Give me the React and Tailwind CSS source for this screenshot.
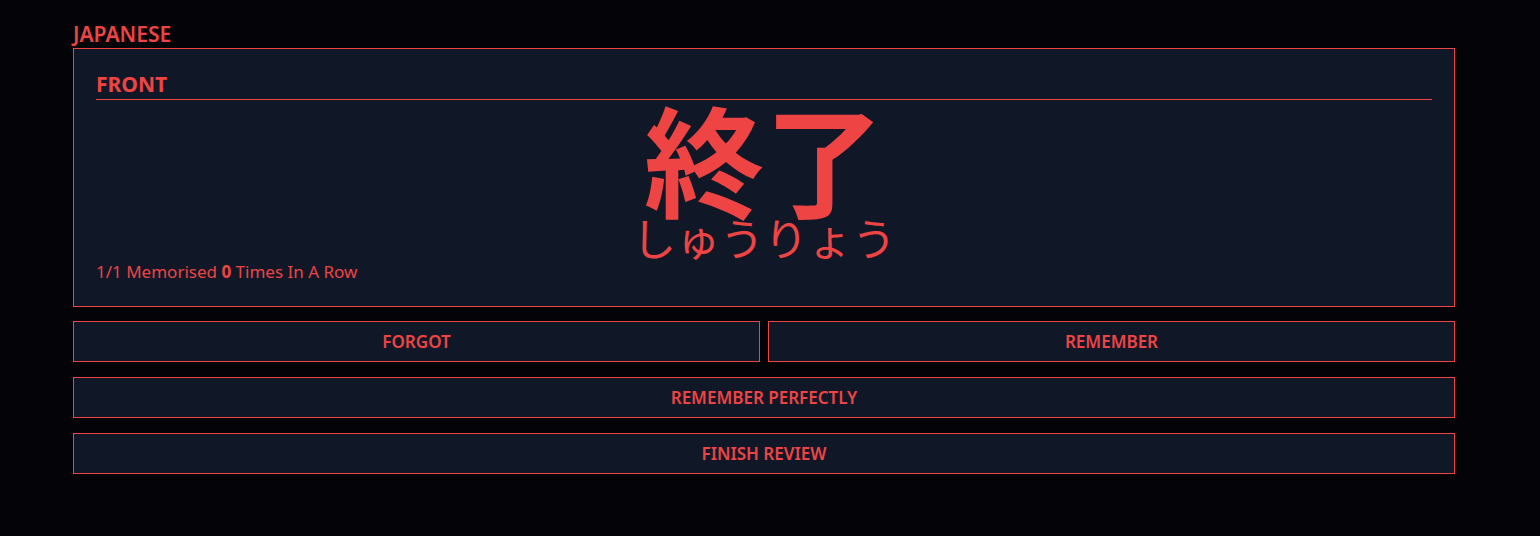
const FONT = "font-['Noto_Sans','Noto_Sans_CJK_JP',sans-serif]";
const JP = "font-['Noto_Sans_CJK_JP',sans-serif]";

const card = {
  deck: 'JAPANESE',
  side: 'FRONT',
  word: '終了',
  reading: 'しゅうりょう',
  position: '1/1',
  streak: 0,
};

function ActionButton({ label, className = '' }) {
  return (
    <button
      className={`h-[41px] border border-[#ef4444] bg-gray-900 text-[17px] font-semibold text-[#ef4444] ${className}`}
    >
      {label}
    </button>
  );
}

export default function App() {
  return (
    <div className={`min-h-screen bg-[#030308] ${FONT}`}>
      <div className="ml-[73px] w-[1382px] pt-[20px]">
        <h2 className="text-[21px] leading-[28px] font-semibold text-[#ef4444]">{card.deck}</h2>

        {/* Carte */}
        <div className="border border-[#ef4444] bg-gray-900 px-[22px] pt-[21px] pb-[22px]">
          <h3 className="border-b border-[#ef4444] text-[21px] leading-[29px] font-bold text-[#ef4444]">
            {card.side}
          </h3>
          <div className="flex flex-col items-center text-[#ef4444]">
            <span className={`${JP} text-[120px] leading-[114px] font-bold`}>{card.word}</span>
            <span className={`${JP} text-[44px] leading-[46px] font-normal`}>{card.reading}</span>
          </div>
          <p className="mt-0 text-[17px] leading-[24px] text-[#ef4444]">
            {card.position} Memorised <span className="font-bold">{card.streak}</span> Times In A Row
          </p>
        </div>

        {/* Actions */}
        <div className="mt-[14px] flex flex-col gap-[15px]">
          <div className="flex gap-[8px]">
            <ActionButton label="FORGOT" className="flex-1" />
            <ActionButton label="REMEMBER" className="flex-1" />
          </div>
          <ActionButton label="REMEMBER PERFECTLY" className="w-full" />
          <ActionButton label="FINISH REVIEW" className="w-full" />
        </div>
      </div>
    </div>
  );
}
